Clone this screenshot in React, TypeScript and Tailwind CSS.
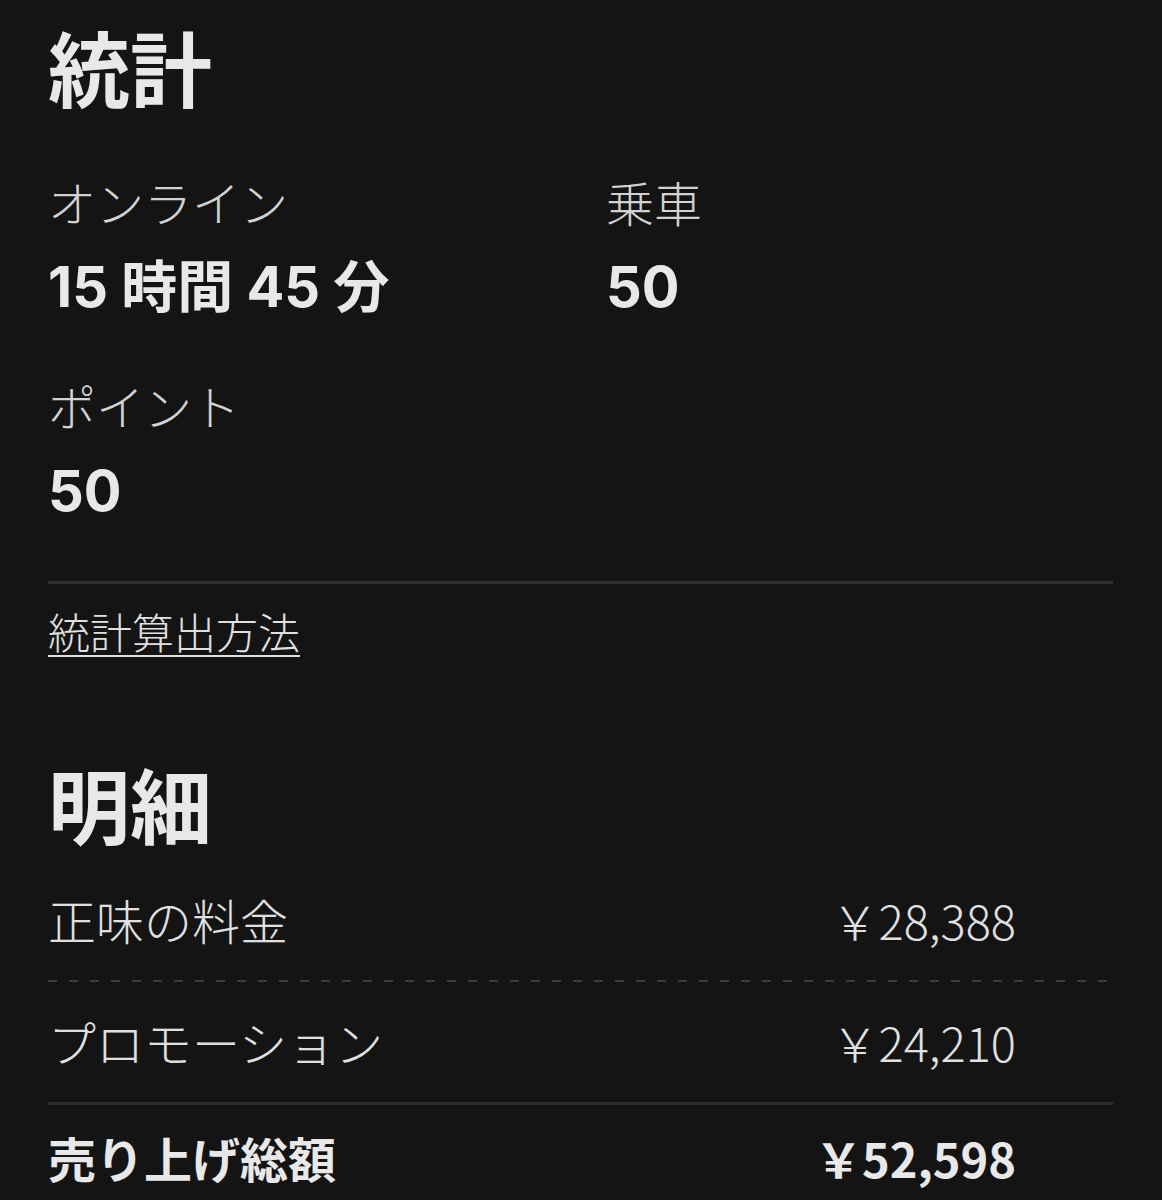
const font = { fontFamily: '"Noto Sans CJK JP", "Noto Sans", sans-serif' };
const numFont = { fontFamily: 'Inter, "Noto Sans CJK JP", sans-serif' };

type StatProps = { label: string; value: React.ReactNode };

const Stat = ({ label, value }: StatProps) => {
  return (
    <div>
      <div className="text-[48px] leading-none font-light text-[#d2d2d2]">{label}</div>
      <div className="mt-[34px] text-[56px] leading-none font-bold text-[#e8e8e8]" style={numFont}>
        {value}
      </div>
    </div>
  );
};

type RowProps = { label: string; amount: string; bold?: boolean; line?: "dashed" | "solid" };

const Row = ({ label, amount, bold, line }: RowProps) => {
  const tone = bold ? "font-bold text-[#e8e8e8]" : "font-light text-[#e0e0e0]";
  return (
    <div>
      <div className={"flex items-center justify-between pr-[97px] " + (bold ? "pt-[28px] pb-[30px]" : "pt-[35px] pb-[37px]")}>
        <div className={"text-[48px] leading-none " + tone}>{label}</div>
        <div className={"text-[47px] leading-none " + tone}>{amount}</div>
      </div>
      {line === "dashed" && (
        <div className="mr-[5px] h-[2px] bg-[repeating-linear-gradient(to_right,#3c3c3c_0_9px,transparent_9px_21px)]" />
      )}
      {line === "solid" && <div className="h-[3px] bg-[#2e2e2e]" />}
    </div>
  );
};

const App = () => {
  return (
    <div className="min-h-[1200px] w-full bg-[#141414] px-[48px] pt-[25px]" style={font}>
      <h1 className="text-[82px] leading-none font-bold text-[#e8e8e8]">統計</h1>

      <div className="mt-[70px] grid grid-cols-[558px_1fr] gap-y-[66px]">
        <Stat label="オンライン" value="15 時間 45 分" />
        <Stat label="乗車" value="50" />
        <Stat label="ポイント" value="50" />
      </div>

      <div className="mt-[62px] h-[3px] w-[1065px] bg-[#2e2e2e]" />

      <a
        href="#"
        className="mt-[26px] inline-block text-[42px] leading-none font-light text-[#e0e0e0] underline decoration-[2px] underline-offset-[6px]"
      >
        統計算出方法
      </a>

      <h2 className="mt-[108px] text-[82px] leading-none font-bold text-[#e8e8e8]">明細</h2>

      <div className="mt-[16px] w-[1065px]">
        <Row label="正味の料金" amount="￥28,388" line="dashed" />
        <Row label="プロモーション" amount="￥24,210" line="solid" />
        <Row label="売り上げ総額" amount="￥52,598" bold />
      </div>
    </div>
  );
};

export default App;
